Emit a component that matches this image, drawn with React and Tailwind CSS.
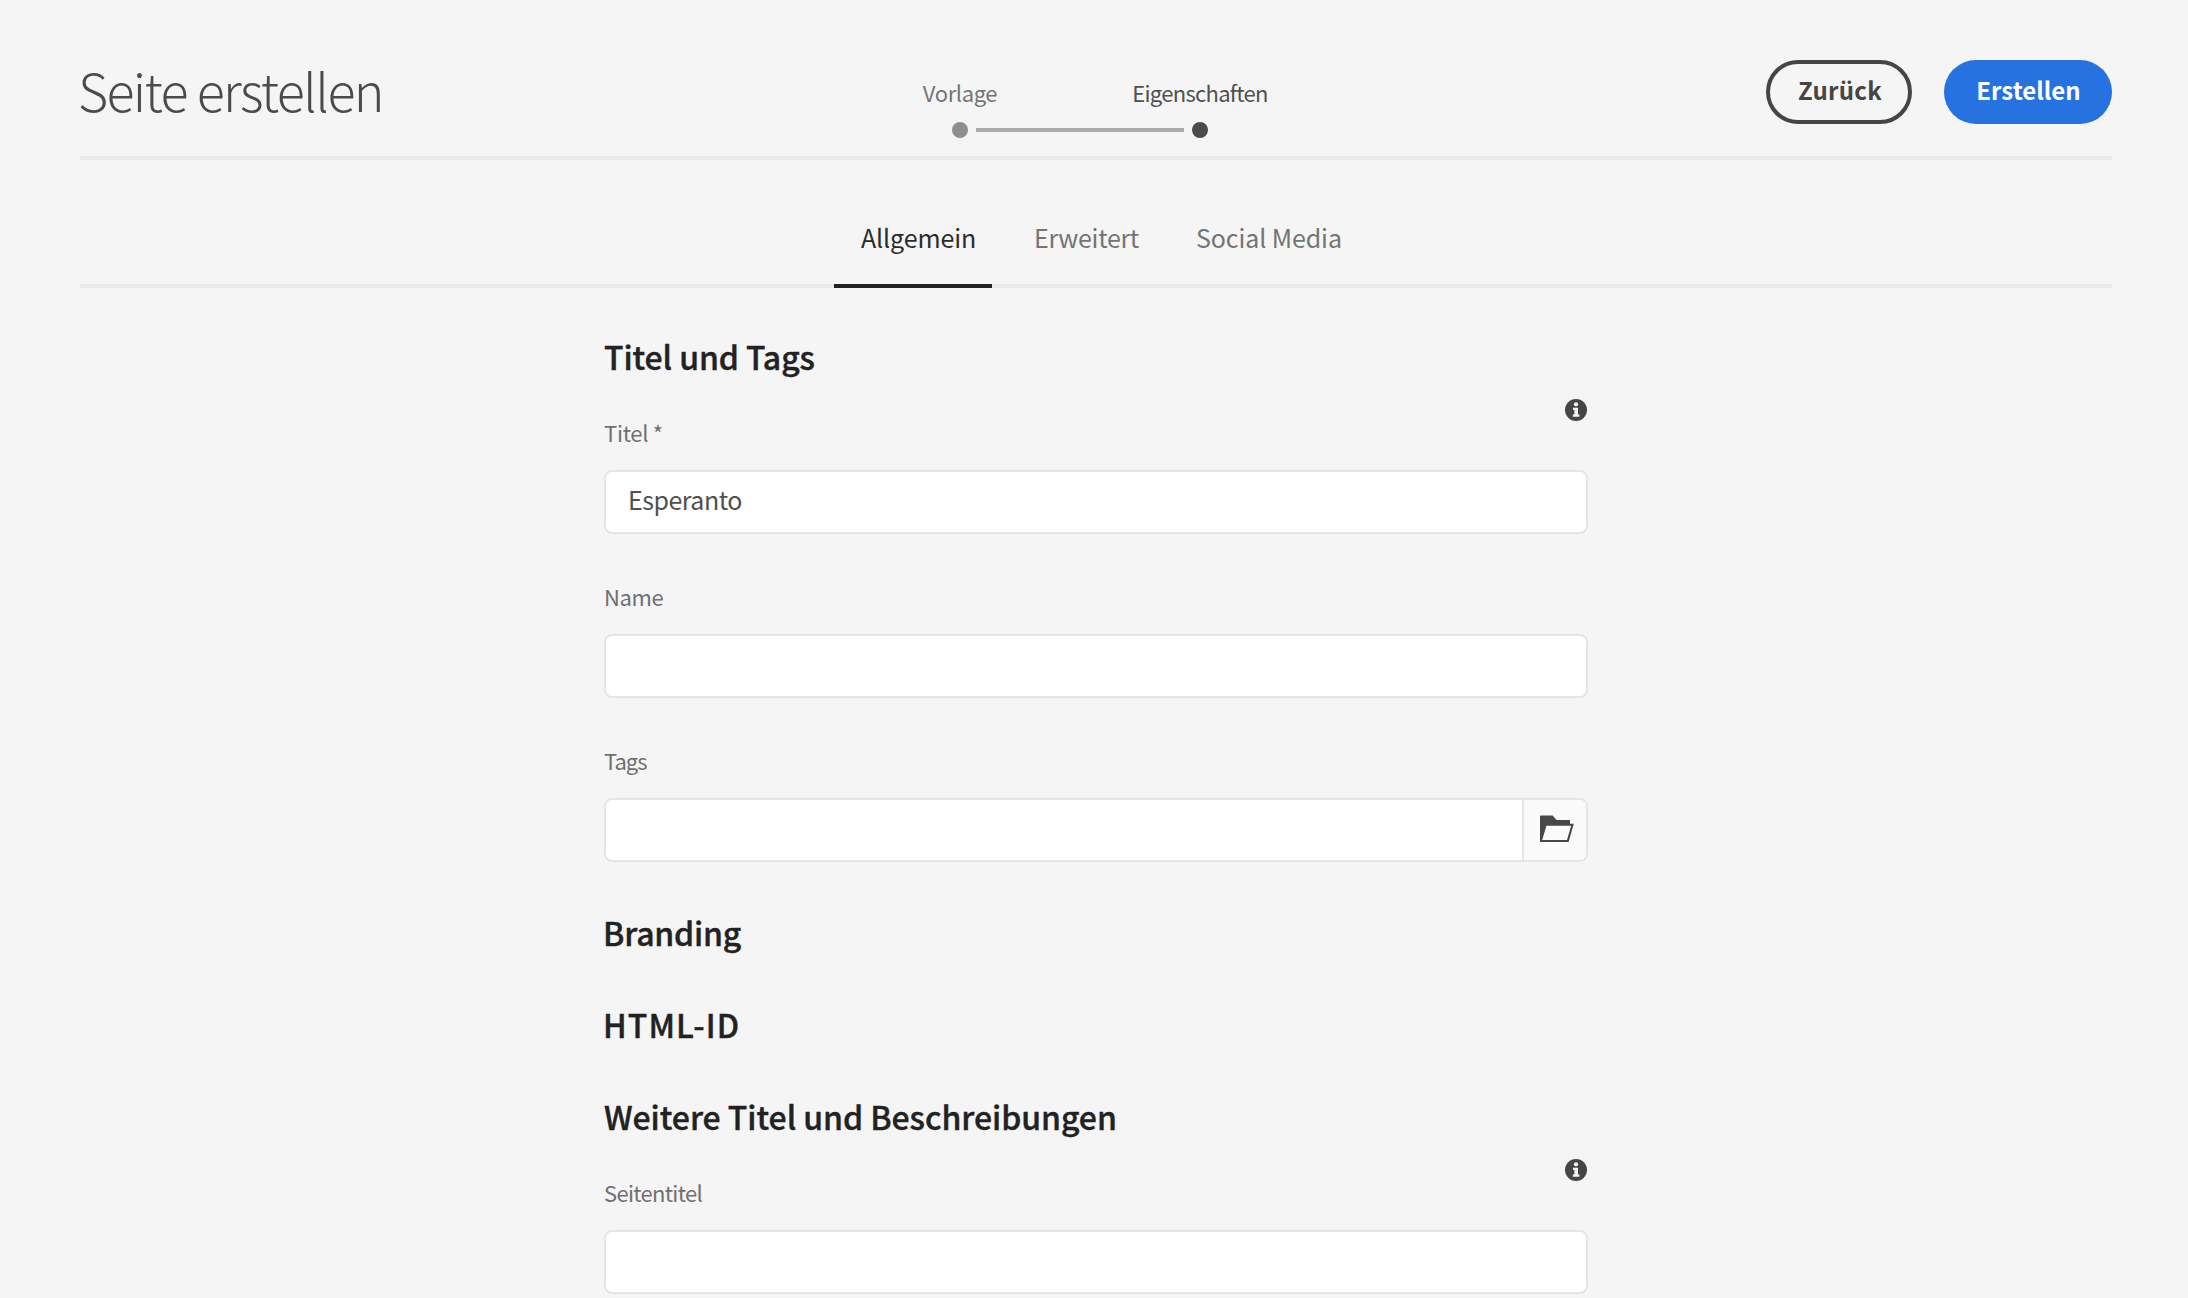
function InfoIcon() {
  return (
    <svg viewBox="0 0 22 22" className="absolute right-px -top-[17px] size-[22px]" aria-hidden="true">
      <circle cx="11" cy="11" r="11" fill="#454545" />
      <circle cx="11" cy="5.3" r="2.1" fill="#f5f5f5" />
      <path d="M8 8.8h5v6.8h1.4v2.2H7.8v-2.2h1.6v-4.6H8z" fill="#f5f5f5" />
    </svg>
  );
}

function FolderIcon() {
  return (
    <svg viewBox="0 0 34 28" className="h-7 w-[34px]" aria-hidden="true">
      <path d="M0 1.2Q0 .5.8.5H12.6L16.6 5H30V8.7H33.8L28.6 27H0Z" fill="#484848" />
      <path d="M6.4 10.7H31.1L27 24.9H2.2Z" fill="#fbfbfb" />
    </svg>
  );
}

function Heading({ children, className }) {
  return (
    <h2
      className={`h-12 text-[32px] leading-[48px] font-medium whitespace-nowrap text-[#222] [-webkit-text-stroke:0.4px_#222] ${className}`}
    >
      {children}
    </h2>
  );
}

function Field({ label, labelClass, value, info, browse }) {
  return (
    <div className="relative">
      {info && <InfoIcon />}
      <div className={`h-8 text-[22px] leading-8 whitespace-nowrap text-[#707070] ${labelClass}`}>{label}</div>
      <div className="mt-[22px] flex h-16 overflow-hidden rounded-lg border-2 border-[#e5e5e5] bg-white">
        <div className="flex-1 pt-[9px] pl-[22px] text-[25px] leading-9 tracking-[-0.5px] text-[#505050]">{value}</div>
        {browse && (
          <button className="flex w-16 items-center justify-center border-l-2 border-[#e5e5e5] bg-[#fafafa] pb-0.5 pl-1">
            <FolderIcon />
          </button>
        )}
      </div>
    </div>
  );
}

export default function App() {
  return (
    <div className="h-screen overflow-hidden bg-[#f5f5f5] pr-[76px] pl-20 font-['Noto_Sans_CJK_SC','Noto_Sans',sans-serif]">
      <header className="flex h-40 items-start border-b-4 border-[#eaeaea]">
        <h1 className="-ml-0.5 mt-[58px] w-[762px] text-[52px] leading-[64px] font-light tracking-[-1.65px] whitespace-nowrap text-[#4b4b4b]">
          Seite erstellen
        </h1>
        <div className="mt-[76px] w-[480px]">
          <div className="grid grid-cols-2 text-center text-[22px] leading-8">
            <span className="tracking-[-0.38px] text-[#747474]">Vorlage</span>
            <span className="tracking-[-0.7px] text-[#505050]">Eigenschaften</span>
          </div>
          <div className="mt-3.5 flex items-center justify-center gap-2">
            <span className="size-4 rounded-full bg-[#8e8e8e]" />
            <span className="h-1 w-[208px] bg-[#ababab]" />
            <span className="size-4 rounded-full bg-[#4b4b4b]" />
          </div>
        </div>
        <div className="mt-[60px] ml-auto flex gap-8 text-2xl font-bold">
          <button className="flex h-16 w-[146px] items-center justify-center rounded-full border-4 border-[#454545] pb-1 pl-0.5 tracking-[0.3px] text-[#454545]">
            Zurück
          </button>
          <button className="flex h-16 w-[168px] items-center justify-center rounded-full bg-[#2672e1] pb-1 pl-px text-white">
            Erstellen
          </button>
        </div>
      </header>

      <nav className="flex h-32 border-b-4 border-[#eaeaea] pl-[754px] text-[25px] leading-8 whitespace-nowrap text-[#747474]">
        <a className="-mb-1 w-[158px] border-b-4 border-[#222] pt-[61px] pl-[27px] tracking-[-0.1px] text-[#2c2c2c]">
          Allgemein
        </a>
        <a className="ml-[42px] w-[162px] pt-[61px] tracking-[-0.3px]">Erweitert</a>
        <a className="pt-[61px] tracking-[-0.1px]">Social Media</a>
      </nav>

      <main className="mx-auto w-[984px] pt-11">
        <Heading className="mb-9 tracking-[-0.1px]">Titel und Tags</Heading>
        <div className="mb-[46px] flex flex-col gap-[46px]">
          <Field label="Titel *" labelClass="tracking-[-0.3px]" value="Esperanto" info />
          <Field label="Name" labelClass="tracking-[-0.4px]" />
          <Field label="Tags" labelClass="tracking-[-1px]" browse />
        </div>
        <Heading className="-ml-px mb-11 tracking-[-0.2px]">Branding</Heading>
        <Heading className="-ml-px mb-11 tracking-[1.1px]">HTML-ID</Heading>
        <Heading className="mb-9 tracking-[-0.05px]">Weitere Titel und Beschreibungen</Heading>
        <Field label="Seitentitel" labelClass="tracking-[-0.7px]" info />
      </main>
    </div>
  );
}
